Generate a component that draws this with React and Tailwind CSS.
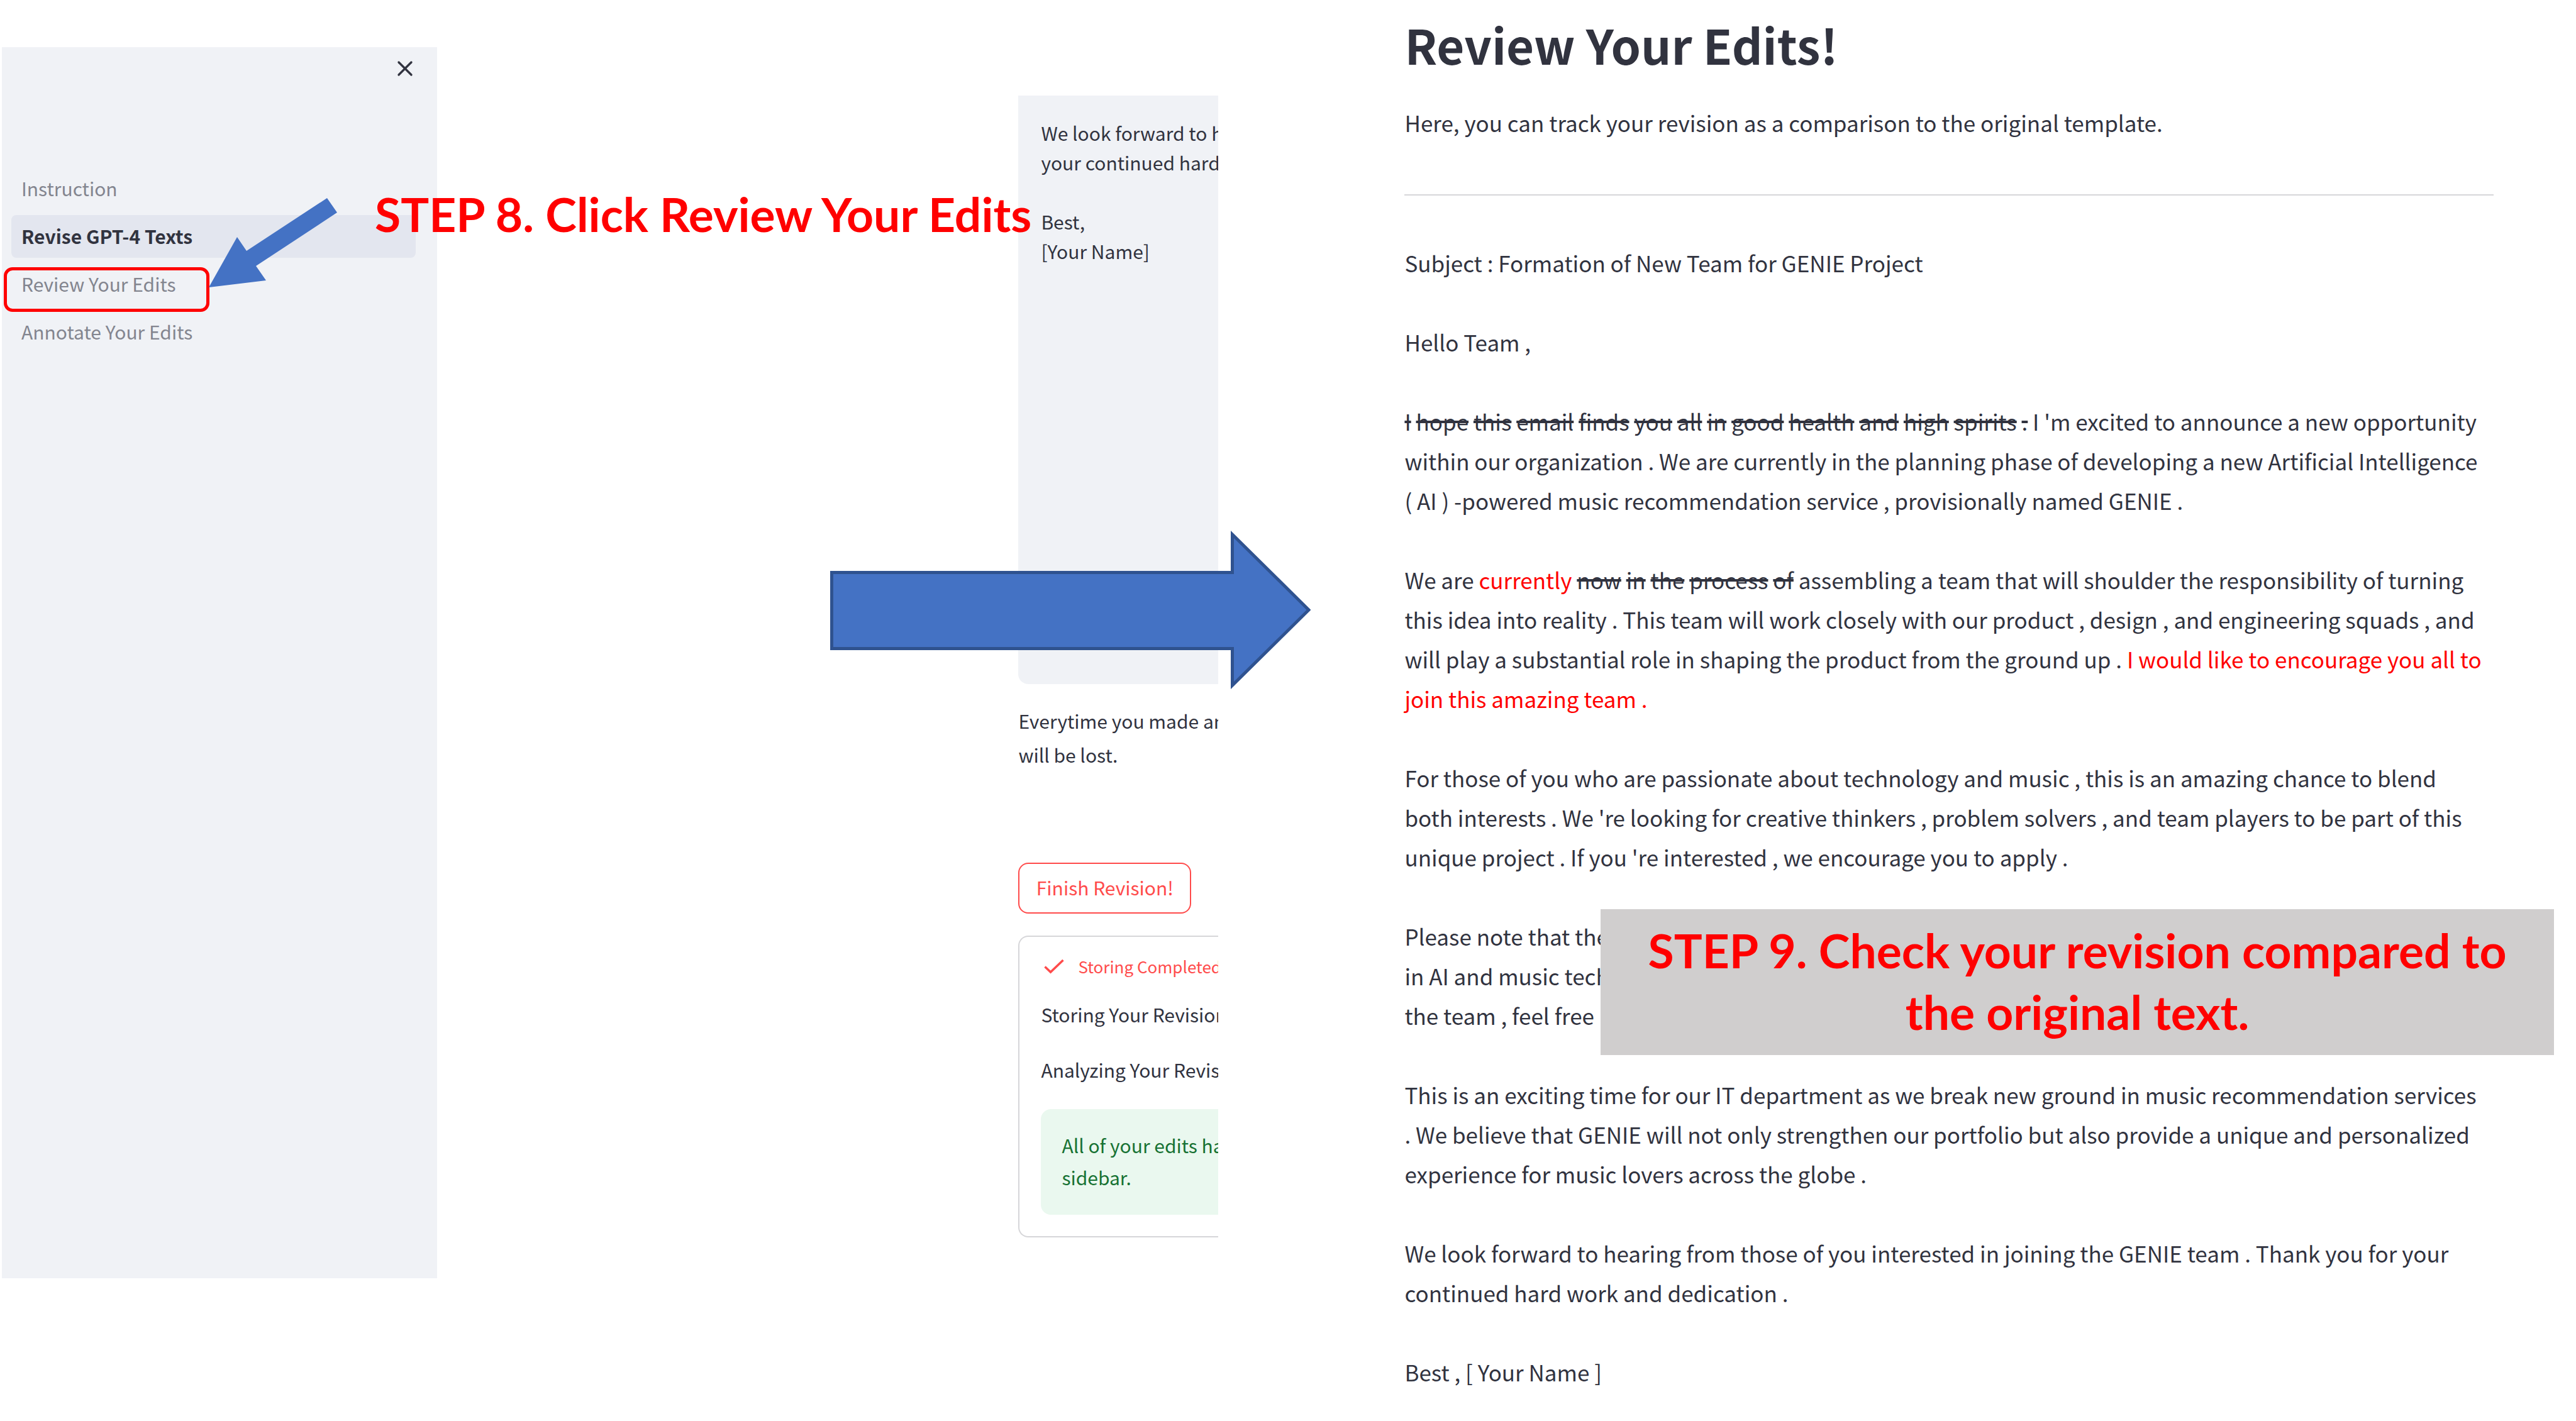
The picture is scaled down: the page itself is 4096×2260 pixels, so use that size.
import { Fragment } from "react";
import { X } from "lucide-react";

const navItems = [
  { label: "Instruction" },
  { label: "Revise GPT-4 Texts", active: true },
  { label: "Review Your Edits", marked: true },
  { label: "Annotate Your Edits" },
];

const draft = "We look forward to hearing\nyour continued hard work\n\nBest,\n[Your Name]";

function Sidebar() {
  return (
    <aside className="ml-[3px] mt-[75px] flex h-[1958px] w-[692px] shrink-0 flex-col bg-[#f0f2f6] pt-[17px]">
      <button type="button" aria-label="Close sidebar" className="mr-[34px] self-end">
        <X className="-m-[3px] h-10 w-10" strokeWidth={2} />
      </button>
      <nav className="ml-[15px] mr-[34px] mt-[140px] flex flex-col gap-2">
        {navItems.map((item) => (
          <a
            key={item.label}
            href="#"
            className={
              item.active
                ? "relative flex h-[68px] items-center rounded-lg bg-[#e3e6ef] px-4 pb-[2px] font-bold text-[#31333f]"
                : "relative flex h-[68px] items-center rounded-lg px-4 pb-[2px] text-[#83858f]"
            }
          >
            {item.label}
            {item.marked && (
              <span className="absolute -left-3 top-[7px] h-[71px] w-[327px] rounded-[14px] border-[5px] border-[#ff0000]" />
            )}
          </a>
        ))}
      </nav>
    </aside>
  );
}

function Editor() {
  return (
    <section className="ml-auto mt-[152px] w-[318px] shrink-0 overflow-hidden whitespace-nowrap">
      <textarea
        aria-label="Revised text"
        wrap="off"
        defaultValue={draft}
        className="block h-[936px] w-full resize-none overflow-hidden rounded-bl-2xl bg-[#f0f2f6] pl-9 pt-9 leading-[47px] outline-none"
      />
      <p className="mt-[31px] leading-[54px]">
        Everytime you made an
        <br />
        will be lost.
      </p>
      <button
        type="button"
        className="mt-[145px] h-[81px] w-[275px] rounded-2xl border-2 border-[#ff4b4b] pb-[2px] text-[#ff4b4b]"
      >
        Finish Revision!
      </button>
      <div className="mt-[35px] rounded-l-2xl border-2 border-r-0 border-[#d6d6d9] pb-[34px] pl-[34px] pt-[22px] leading-[51px]">
        <div className="flex items-center text-[26px] leading-[50px] text-[#ff4b4b]">
          <svg
            viewBox="0 0 32 24"
            className="ml-[5px] h-6 w-8 shrink-0"
            fill="none"
            stroke="currentColor"
            strokeWidth="3.5"
            aria-hidden="true"
          >
            <path d="M1.500 12.500 L10.500 21 L30.500 2" />
          </svg>
          <span className="ml-[22px]">Storing Completed</span>
        </div>
        <p className="mt-[26px]">Storing Your Revision</p>
        <p className="mt-[37px]">Analyzing Your Revision</p>
        <div className="mt-[37px] rounded-l-2xl bg-[#eaf8ef] pb-[34px] pl-[33px] pt-8 text-[#177233]">
          All of your edits have
          <br />
          sidebar.
        </div>
      </div>
    </section>
  );
}

function Removed({ text }) {
  return text.split(" ").map((word, i) => (
    <Fragment key={i}>
      {i > 0 && " "}
      <s className="decoration-4">{word}</s>
    </Fragment>
  ));
}

function Review() {
  return (
    <main className="ml-[296px] mr-[131px] mt-[21px] flex-1 whitespace-nowrap text-[35px] leading-[63px]">
      <h1 className="text-[76px] font-bold leading-[98px]">Review Your Edits!</h1>
      <p className="mt-11">Here, you can track your revision as a comparison to the original template.</p>
      <hr className="mt-[83px] border-t-2 border-[#d6d6d9]" />
      <article className="mt-[75px] flex flex-col gap-[63px]">
        <p>Subject : Formation of New Team for GENIE Project</p>
        <p>Hello Team ,</p>
        <p>
          <Removed text="I hope this email finds you all in good health and high spirits ." /> I 'm excited to announce
          a new opportunity
          <br />
          within our organization . We are currently in the planning phase of developing a new Artificial Intelligence
          <br />( AI ) -powered music recommendation service , provisionally named GENIE .
        </p>
        <p>
          We are <ins className="text-[#ff0000] no-underline">currently</ins>{" "}
          <Removed text="now in the process of" /> assembling a team that will shoulder the responsibility of turning
          <br />
          this idea into reality . This team will work closely with our product , design , and engineering squads , and
          <br />
          will play a substantial role in shaping the product from the ground up .{" "}
          <ins className="text-[#ff0000] no-underline">
            I would like to encourage you all to
            <br />
            join this amazing team .
          </ins>
        </p>
        <p>
          For those of you who are passionate about technology and music , this is an amazing chance to blend
          <br />
          both interests . We 're looking for creative thinkers , problem solvers , and team players to be part of this
          <br />
          unique project . If you 're interested , we encourage you to apply .
        </p>
        <div className="relative">
          <p>
            Please note that the
            <br />
            in AI and music tech
            <br />
            the team , feel free
          </p>
          <div className="absolute -right-24 -top-[11px] h-[232px] w-[1516px] bg-[#d0cece] pt-4 text-center font-[Lato] text-[75px] font-bold leading-[98px] text-[#ff0000]">
            STEP 9. Check your revision compared to
            <br />
            the original text.
          </div>
        </div>
        <p>
          This is an exciting time for our IT department as we break new ground in music recommendation services
          <br />
          . We believe that GENIE will not only strengthen our portfolio but also provide a unique and personalized
          <br />
          experience for music lovers across the globe .
        </p>
        <p>
          We look forward to hearing from those of you interested in joining the GENIE team . Thank you for your
          <br />
          continued hard work and dedication .
        </p>
        <p>Best , [ Your Name ]</p>
      </article>
    </main>
  );
}

export default function App() {
  return (
    <div className="relative flex min-h-screen w-full items-start overflow-hidden bg-white font-['Noto_Sans_CJK_SC','Noto_Sans',sans-serif] text-[30px] text-[#31333f]">
      <div className="flex w-[47.3%] shrink-0 items-start">
        <Sidebar />
        <Editor />
      </div>
      <Review />

      <svg
        viewBox="0 0 206 144"
        className="absolute left-[332px] top-[314px] h-[144px] w-[206px]"
        fill="#4472c4"
        aria-hidden="true"
      >
        <path d="M188 1 L204 24 L75 109 L91 132 L0 143 L45 63 L60 85 Z" />
      </svg>
      <p className="absolute left-[596px] top-[292px] whitespace-nowrap font-[Lato] text-[75px] font-bold leading-[96px] text-[#ff0000]">
        STEP 8. Click Review Your Edits
      </p>
      <svg
        viewBox="0 0 764 256"
        className="absolute left-[1320px] top-[842px] h-[256px] w-[764px]"
        fill="#4472c4"
        stroke="#2f528f"
        strokeWidth="5"
        aria-hidden="true"
      >
        <path d="M2.500 68.500 H639.500 V8 L761 128 L639.500 248 V189.500 H2.500 Z" />
      </svg>
    </div>
  );
}
